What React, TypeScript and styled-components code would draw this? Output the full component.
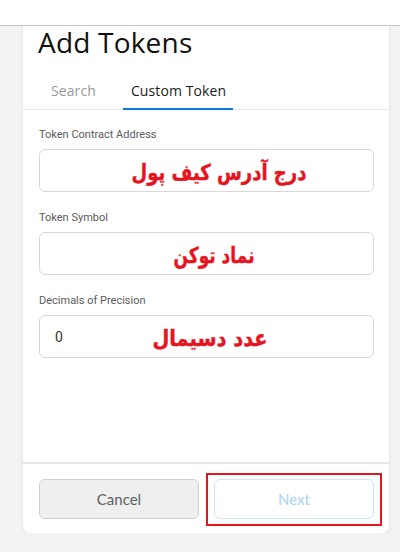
import React from "react"
import styled, { createGlobalStyle } from "styled-components"

const GlobalStyle = createGlobalStyle`
    html, body {
        margin: 0;
        padding: 0;
        background: #f3f3f3;
        font-family: "Open Sans", "Lato", sans-serif;
    }
`

const TopBar = styled.div`
    height: 25px;
    background: #ffffff;
    border-bottom: 1px solid #c9c9c9;
`

const Page = styled.div`
    display: flex;
    padding-left: 23px;
`

const Card = styled.div`
    width: 366px;
    height: 507px;
    background: #ffffff;
    border-radius: 0 0 7px 7px;
    box-shadow: 0 1px 4px rgba(0, 0, 0, 0.09);
    display: flex;
    flex-direction: column;
`

const Title = styled.h1`
    margin: 0;
    padding: 0 0 0 15px;
    font-size: 28px;
    font-weight: 400;
    letter-spacing: 0.2px;
    line-height: 32px;
    color: #111111;
`

const Tabs = styled.div`
    display: flex;
    gap: 20px;
    margin-top: 23px;
    padding-left: 20px;
    border-bottom: 1px solid #e8e8e8;
`

const Tab = styled.div<{ $active?: boolean }>`
    padding: 0 7px 8px 8px;
    font-size: 14px;
    letter-spacing: 0.1px;
    line-height: 19px;
    color: ${p => (p.$active ? "#1b1b1b" : "#9a9a9a")};
    border-bottom: 2px solid ${p => (p.$active ? "#037dd6" : "transparent")};
    margin-bottom: -1px;
`

const Form = styled.div`
    display: flex;
    flex-direction: column;
    gap: 19px;
    padding: 18px 15px 0 16px;
`

const Field = styled.div`
    display: flex;
    flex-direction: column;
    gap: 7px;
`

const Label = styled.label`
    font-family: "Roboto", sans-serif;
    font-size: 11px;
    line-height: 14px;
    color: #5b5b5b;
`

const InputBox = styled.div`
    position: relative;
    height: 41px;
    border: 1px solid #d8d8d8;
    border-radius: 6px;
    display: flex;
    align-items: center;
    padding: 0 15px;
    font-family: "Roboto", sans-serif;
    font-size: 14px;
    color: #333333;
`

const Note = styled.span<{ $shift: number; $squeeze: number }>`
    position: absolute;
    left: 50%;
    top: 50%;
    transform: translate(calc(-50% + ${p => p.$shift}px), -45%) scale(${p => p.$squeeze}, 1.1);
    direction: rtl;
    white-space: nowrap;
    font-family: "DejaVu Sans", sans-serif;
    font-weight: 700;
    font-size: 20px;
    color: #e5141e;
    -webkit-text-stroke: 0.4px #e5141e;
`

const Footer = styled.div`
    margin-top: auto;
    border-top: 2px solid #e3e7eb;
    padding: 15px 15px 14px 16px;
    display: grid;
    grid-template-columns: 1fr 1fr;
    gap: 15px;
`

const Button = styled.button<{ $primary?: boolean }>`
    position: relative;
    height: 40px;
    border-radius: 6px;
    font-family: "Lato", sans-serif;
    font-size: 15px;
    cursor: pointer;
    background: ${p => (p.$primary ? "#ffffff" : "#efefef")};
    border: 1px solid ${p => (p.$primary ? "#cde5f6" : "#cfcfcf")};
    color: ${p => (p.$primary ? "#aad3f2" : "#5e5e5e")};
`

const Highlight = styled.span`
    position: absolute;
    left: -9px;
    right: -9px;
    top: -7px;
    bottom: -8px;
    border: 2px solid #e5141e;
    pointer-events: none;
`

const fields = [
    { label: "Token Contract Address", note: "درج آدرس کیف پول", shift: 12, squeeze: 0.9 },
    { label: "Token Symbol", note: "نماد توکن", shift: 7, squeeze: 0.85 },
    { label: "Decimals of Precision", note: "عدد دسیمال", shift: 3, squeeze: 0.97, value: "0" },
]

const App = () => {
    return (
        <>
            <GlobalStyle />
            <TopBar />
            <Page>
                <Card>
                    <Title>Add Tokens</Title>
                    <Tabs>
                        <Tab>Search</Tab>
                        <Tab $active>Custom Token</Tab>
                    </Tabs>
                    <Form>
                        {fields.map(f => (
                            <Field key={f.label}>
                                <Label>{f.label}</Label>
                                <InputBox>
                                    {f.value}
                                    <Note $shift={f.shift} $squeeze={f.squeeze}>{f.note}</Note>
                                </InputBox>
                            </Field>
                        ))}
                    </Form>
                    <Footer>
                        <Button>Cancel</Button>
                        <Button $primary>
                            Next
                            <Highlight />
                        </Button>
                    </Footer>
                </Card>
            </Page>
        </>
    )
}

export default App
